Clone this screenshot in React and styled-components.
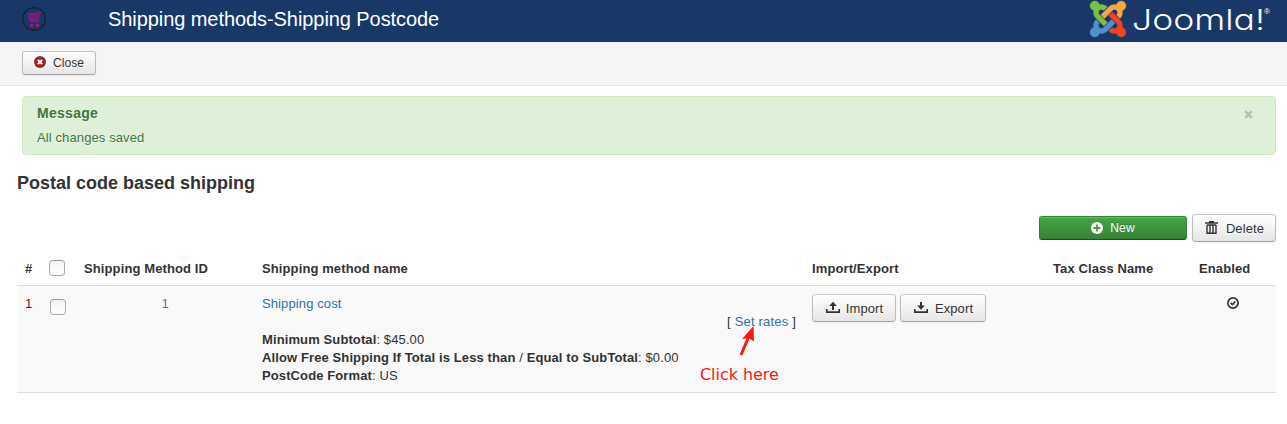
import React from "react";
import styled, { createGlobalStyle, css } from "styled-components";

const GlobalStyle = createGlobalStyle`
  * { box-sizing: border-box; }
  body {
    margin: 0;
    background: #fff;
    color: #333;
    font: 13px/18px "Liberation Sans", Arial, sans-serif;
    letter-spacing: 0.11px;
  }
`;

const Page = styled.div`
  height: 424px;
  overflow: hidden;
`;

const Header = styled.header`
  display: flex;
  align-items: flex-start;
  height: 42px;
  padding: 0 14px 0 22px;
  background: #1a3867;
  color: #fff;
`;

const CartLogo = styled.svg`
  width: 24px;
  height: 24px;
  margin-top: 7px;
`;

const Title = styled.h1`
  flex: 1;
  margin: 0 0 0 62px;
  font-size: 20px;
  line-height: 38px;
  font-weight: normal;
  letter-spacing: -0.07px;
`;

const JoomlaLogo = styled.svg`
  width: 184px;
  height: 42px;
  letter-spacing: 0;
`;

const Wordmark = styled.text`
  fill: #fff;
  font: 300 29px Inter, sans-serif;
  font-feature-settings: "cv11";
`;

const Toolbar = styled.div`
  height: 44px;
  padding: 9px 22px;
  background: #f5f5f5;
  border-bottom: 1px solid #e3e3e3;
`;

const Button = styled.button`
  display: inline-flex;
  align-items: center;
  justify-content: center;
  width: ${(p) => p.$width}px;
  height: 28px;
  padding: 2px 0 0 1px;
  gap: ${(p) => p.$gap ?? 6}px;
  border: 1px solid #bbb;
  border-color: #c5c5c5 #bbb #a2a2a2;
  border-radius: 4px;
  background: linear-gradient(#fff, #e6e6e6);
  box-shadow: inset 0 1px 0 rgba(255, 255, 255, 0.2), 0 1px 2px rgba(0, 0, 0, 0.05);
  color: #333;
  font: inherit;
  letter-spacing: 0.11px;
  text-shadow: 0 1px 1px rgba(255, 255, 255, 0.75);

  ${(p) =>
    p.$small &&
    css`
      height: 24px;
      padding: 0;
      border-radius: 3px;
      font-size: 12px;
    `}

  ${(p) =>
    p.$success &&
    css`
      border-color: #378137 #378137 #204b20;
      background: linear-gradient(#46a546, #378137);
      box-shadow: inset 0 1px 0 rgba(255, 255, 255, 0.2);
      color: #fff;
      text-shadow: 0 -1px 0 rgba(0, 0, 0, 0.25);
    `}
`;

const Icon = styled.svg`
  width: ${(p) => p.$size ?? 14}px;
  height: ${(p) => p.$size ?? 14}px;
  flex: none;
  margin-bottom: ${(p) => p.$lift ?? 0}px;
`;

const Content = styled.main`
  padding: 10px 11px 0 17px;
`;

const Alert = styled.section`
  display: flex;
  justify-content: space-between;
  height: 59px;
  margin-left: 5px;
  padding: 7px 22px 0 14px;
  border: 1px solid #d0e8c0;
  border-radius: 4px;
  background: #dff0d8;
  color: #3c763d;
  text-shadow: 0 1px 0 rgba(255, 255, 255, 0.5);
`;

const AlertTitle = styled.h4`
  margin: 0 0 7px;
  font-size: 14px;
  line-height: 18px;
  letter-spacing: 0.28px;
`;

const AlertText = styled.p`
  margin: 0;
`;

const Dismiss = styled.button`
  display: flex;
  width: 9px;
  height: 9px;
  margin-top: 6px;
  padding: 0;
  border: 0;
  background: none;
`;

const Heading = styled.h3`
  margin: 9px 0 13px;
  font-size: 18px;
  line-height: 36px;
  letter-spacing: 0;
  padding-top: 1px;
`;

const Actions = styled.div`
  display: flex;
  align-items: center;
  justify-content: flex-end;
  gap: 5px;
  height: 28px;
`;

const Table = styled.div`
  margin-top: 9px;
`;

const Row = styled.div`
  display: grid;
  grid-template-columns: 24px 35px 178px 550px 241px 146px 85px;
`;

const HeadRow = styled(Row)`
  height: 34px;
  font-weight: bold;
`;

const BodyRow = styled(Row)`
  height: 108px;
  border: solid #ddd;
  border-width: 1px 0;
  background: #f9f9f9;
`;

const Cell = styled.div`
  padding: ${(p) => (p.$control ? 8 : 9)}px 8px 0;
  white-space: nowrap;
  text-align: ${(p) => p.$align ?? "left"};
`;

const Checkbox = styled.input.attrs({ type: "checkbox" })`
  appearance: none;
  display: block;
  width: 16px;
  height: 16px;
  margin: ${(p) => p.$top}px 0 0 ${(p) => p.$left}px;
  border: 1px solid #aaa;
  border-color: #999 #aaa #a8a8a8;
  border-radius: 4px;
  background: linear-gradient(#f3f3f3, #fff);
`;

const Link = styled.a`
  color: #3071a9;
  text-decoration: none;
`;

const IdLink = styled(Link)`
  color: #3a78b8;
  letter-spacing: 0;
`;

const RateLine = styled.div`
  text-align: right;
  letter-spacing: 0.19px;
`;

const ButtonPair = styled.div`
  display: flex;
  gap: 4px;
`;

const Callout = styled.div`
  position: absolute;
  left: 700px;
  top: 326px;
  width: 90px;
  color: #fb1717;
  font: 16px/20px "DejaVu Sans", sans-serif;
  letter-spacing: -0.05px;
`;

const CalloutArrow = styled.svg`
  display: block;
  width: 90px;
  height: 39px;
`;

const ARM =
  "M16.719 14.759L14.22 17.26l-2.37 2.37-.462.466c-1.368 1.365-3.297 1.83-5.047 1.397-.327 1.424-1.604 2.49-3.13 2.49C1.438 23.983 0 22.547 0 20.772c0-1.518 1.055-2.789 2.469-3.123-.446-1.76.016-3.705 1.396-5.08l.179-.18 2.37 2.37-.184.181c-.769.779-.769 2.024 0 2.789.771.78 2.022.78 2.787 0l.465-.465 2.367-2.371 2.502-2.506z";

const arms = [
  ["#5091cd", 0],
  ["#7ac143", 90],
  ["#f9a541", 180],
  ["#f44321", 270],
];

function Joomla() {
  return (
    <JoomlaLogo viewBox="0 0 184 42" aria-label="Joomla!">
      <g transform="translate(1 1) scale(1.5)">
        {arms.map(([fill, angle]) => (
          <path key={fill} d={ARM} fill={fill} stroke={fill} strokeWidth=".2" transform={`rotate(${angle} 12 12)`} />
        ))}
      </g>
      <Wordmark x="43" y="29.5" textLength="133" lengthAdjust="spacingAndGlyphs">
        Joomla!
      </Wordmark>
      <text x="175" y="14" fill="#fff" fontFamily="Liberation Sans, sans-serif" fontSize="8">®</text>
    </JoomlaLogo>
  );
}

function TrayIcon({ down }) {
  return (
    <Icon viewBox="0 0 14 14" fill="#333" $lift={2}>
      <path d="M0 8h1.6v2.3h10.8V8H14v4H0z" />
      <path d={down ? "M6 1h2v3.6h2.8L7 8.8 3.2 4.6H6z" : "M6 9h2V5h2.8L7 .8 3.2 5H6z"} />
    </Icon>
  );
}

export default function App() {
  return (
    <Page>
      <GlobalStyle />
      <Header>
        <CartLogo viewBox="0 0 24 24" fill="none">
          <circle cx="12" cy="12" r="11.3" stroke="#18202f" strokeWidth="1.4" />
          <path d="M5.5 6.5 16 5.5 15.5 14H7.5z" fill="#831d7d" />
          <path d="M15.6 14 17.2 5.4 19.3 4.9M8 14.6h9.5" stroke="#831d7d" strokeWidth="1.3" />
          <path d="M7 9h9M7.5 11.5h8M9 6l1 8M11.5 6v8M14 6l-.7 8" stroke="#56256f" strokeWidth=".5" />
          <path d="M8 17h3v3H8zM14 17h3v3h-3z" fill="#931b80" />
        </CartLogo>
        <Title>Shipping methods-Shipping Postcode</Title>
        <Joomla />
      </Header>

      <Toolbar>
        <Button $small $width={74} $gap={7}>
          <Icon $size={12} $lift={2} viewBox="0 0 12 12">
            <circle cx="6" cy="6" r="6" fill="#942a25" />
            <path d="m3.8 3.8 4.4 4.4m0-4.4L3.8 8.2" stroke="#fff" strokeWidth="1.9" />
          </Icon>
          Close
        </Button>
      </Toolbar>

      <Content>
        <Alert>
          <div>
            <AlertTitle>Message</AlertTitle>
            <AlertText>All changes saved</AlertText>
          </div>
          <Dismiss aria-label="Dismiss">
            <svg width="9" height="9" viewBox="0 0 9 9">
              <path d="m1.2 1.2 6.6 6.6m0-6.6L1.2 7.8" stroke="#b2c0ad" strokeWidth="2.4" />
            </svg>
          </Dismiss>
        </Alert>

        <Heading>Postal code based shipping</Heading>

        <Actions>
          <Button $small $success $width={148} $gap={7}>
            <Icon $size={12} $lift={1} viewBox="0 0 12 12">
              <circle cx="6" cy="6" r="6" fill="#fff" />
              <path d="M6 2.5v7M2.5 6h7" stroke="#419b41" strokeWidth="1.8" />
            </Icon>
            New
          </Button>
          <Button $width={84} $gap={8}>
            <Icon $size={13} $lift={3} viewBox="0 0 13 13" fill="none" stroke="#333">
              <path d="M0 2h13M4 .6h5" strokeWidth="1.4" />
              <path d="M2 4v8.3h9V4M5 4.5V12M8 4.5V12M2 4h9" strokeWidth="1.4" />
            </Icon>
            Delete
          </Button>
        </Actions>

        <Table>
          <HeadRow>
            <Cell>#</Cell>
            <Cell $control><Checkbox $top={1} $left={0} /></Cell>
            <Cell>Shipping Method ID</Cell>
            <Cell>Shipping method name</Cell>
            <Cell>Import/Export</Cell>
            <Cell>Tax Class Name</Cell>
            <Cell>Enabled</Cell>
          </HeadRow>
          <BodyRow>
            <Cell>1</Cell>
            <Cell $control><Checkbox $top={5} $left={1} /></Cell>
            <Cell $align="center"><IdLink>1</IdLink></Cell>
            <Cell>
              <Link>Shipping cost</Link>
              <RateLine>[ <Link>Set rates</Link> ]</RateLine>
              <div><b>Minimum Subtotal</b>: $45.00</div>
              <div><b>Allow Free Shipping If Total is Less than</b> / <b>Equal to SubTotal</b>: $0.00</div>
              <div><b>PostCode Format</b>: US</div>
            </Cell>
            <Cell $control>
              <ButtonPair>
                <Button $width={84}><TrayIcon />Import</Button>
                <Button $width={86} $gap={7}><TrayIcon down />Export</Button>
              </ButtonPair>
            </Cell>
            <Cell />
            <Cell $align="center">
              <Icon $size={13} $lift={-2} viewBox="0 0 13 13" fill="none" stroke="#333">
                <circle cx="6" cy="6" r="5.1" strokeWidth="1.7" />
                <path d="m3.6 5.9 1.7 1.6 3.1-3" strokeWidth="1.7" />
              </Icon>
            </Cell>
          </BodyRow>
        </Table>
      </Content>

      <Callout>
        <CalloutArrow viewBox="0 0 90 39">
          <path d="m41 29 8-19" stroke="#fb1717" strokeWidth="3" />
          <path d="M53.5 0 54 15.5 48.5 12 42 13z" fill="#fb1717" />
        </CalloutArrow>
        Click here
      </Callout>
    </Page>
  );
}
